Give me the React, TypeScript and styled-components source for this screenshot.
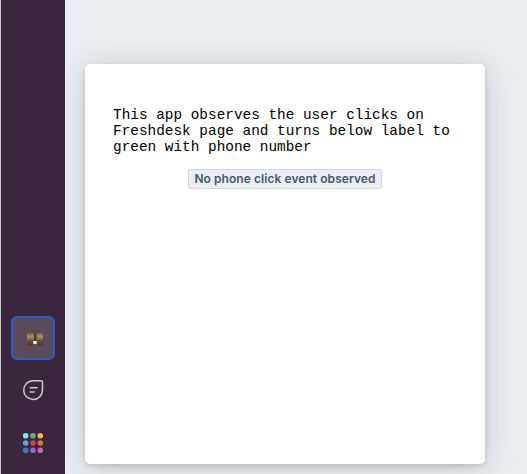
import React from "react";
import styled, { createGlobalStyle } from "styled-components";

const GlobalStyle = createGlobalStyle`
  * { box-sizing: border-box; }
  body { margin: 0; overflow: hidden; }
`;

const Page = styled.div`
  display: flex;
  width: 527px;
  height: 474px;
  background: #ebeff3;
  border-left: 1px solid #c9cacc;
`;

const Sidebar = styled.nav`
  display: flex;
  flex-direction: column;
  justify-content: flex-end;
  align-items: center;
  z-index: 1;
  width: 64px;
  padding-bottom: 9px;
  background: #3a273d;
`;

const NavButton = styled.button<{ $active?: boolean }>`
  display: flex;
  align-items: center;
  justify-content: center;
  width: 44px;
  height: 44px;
  margin-top: 9px;
  margin-bottom: ${(p) => (p.$active ? "-1px" : "0")};
  padding: 0;
  border: 2px solid ${(p) => (p.$active ? "#2c5cc5" : "transparent")};
  border-radius: 6px;
  background: ${(p) => (p.$active ? "#5b4b5d" : "transparent")};

  svg { display: block; }
`;

const Main = styled.main`
  flex: 1;
  padding: 64px 0 0 20px;
`;

const Card = styled.section`
  display: flex;
  flex-direction: column;
  align-items: center;
  width: 400px;
  height: 400px;
  padding: 43px 28px 0;
  border-radius: 5px;
  background: #fff;
  box-shadow: 0 2px 5px rgba(20, 35, 40, 0.15), 0 4px 32px rgba(20, 35, 40, 0.2);
`;

const Description = styled.p`
  align-self: stretch;
  margin: 0 0 14px;
  color: #000;
  font: 14.4px/16px "Liberation Mono", monospace;
`;

const Label = styled.span`
  width: 194px;
  height: 20px;
  border: 1px solid #cfd7df;
  border-radius: 2px;
  background: #ebeff3;
  color: #475867;
  font: 600 12px/18px Inter, sans-serif;
  letter-spacing: 0.06px;
  text-align: center;
  white-space: nowrap;
`;

const BriefcaseIcon = () => (
  <svg width="18" height="18" viewBox="0 0 18 18" transform="translate(2 0)">
    <defs>
      <linearGradient id="leather" x1="0" y1="0" x2="0" y2="1">
        <stop offset="0" stopColor="#6f5442" />
        <stop offset="0.28" stopColor="#a98f76" />
        <stop offset="0.6" stopColor="#7a5c48" />
        <stop offset="1" stopColor="#4a3328" />
      </linearGradient>
    </defs>
    <path d="M6.2 4V2h5.6v2" fill="none" stroke="#5c443c" strokeWidth="1.3" />
    <rect x="1" y="3.8" width="16" height="12.4" rx="1" fill="url(#leather)" />
    <path d="M8 4h2.5v8H8z" fill="#513a2d" />
    <path d="M1 12.2h16" stroke="#4d382d" strokeWidth="0.5" />
    <path d="M7.3 12h3.4v3.2H7.3z" fill="#eeeae4" />
  </svg>
);

const ChatIcon = () => (
  <svg width="22" height="22" viewBox="0 0 22 22" fill="none" stroke="#cfc8d0" strokeWidth="1.5" strokeLinecap="round">
    <path d="M11 1.7h7.5q2 0 2 2V11A9.4 9.4 0 1 1 11 1.7Z" />
    <path d="M8.2 8.8h6.9M8.2 13h4" />
  </svg>
);

const appColors = [
  "#7de3f4", "#59b878", "#f3b944",
  "#5da4e8", "#cb4057", "#e46a3b",
  "#447bb5", "#9368c2", "#b66bc6",
];

const AppsIcon = () => (
  <svg width="22" height="22" viewBox="0 0 22 22">
    {appColors.map((color, i) => (
      <circle key={color} cx={3.7 + (i % 3) * 7.3} cy={3.7 + Math.floor(i / 3) * 7.3} r="2.8" fill={color} />
    ))}
  </svg>
);

export default function App() {
  return (
    <>
      <GlobalStyle />
      <Page>
        <Sidebar>
          <NavButton $active aria-label="Phone click app"><BriefcaseIcon /></NavButton>
          <NavButton aria-label="Chat"><ChatIcon /></NavButton>
          <NavButton aria-label="Apps"><AppsIcon /></NavButton>
        </Sidebar>
        <Main>
          <Card>
            <Description>
              This app observes the user clicks on Freshdesk page and turns below label to green with phone number
            </Description>
            <Label>No phone click event observed</Label>
          </Card>
        </Main>
      </Page>
    </>
  );
}
